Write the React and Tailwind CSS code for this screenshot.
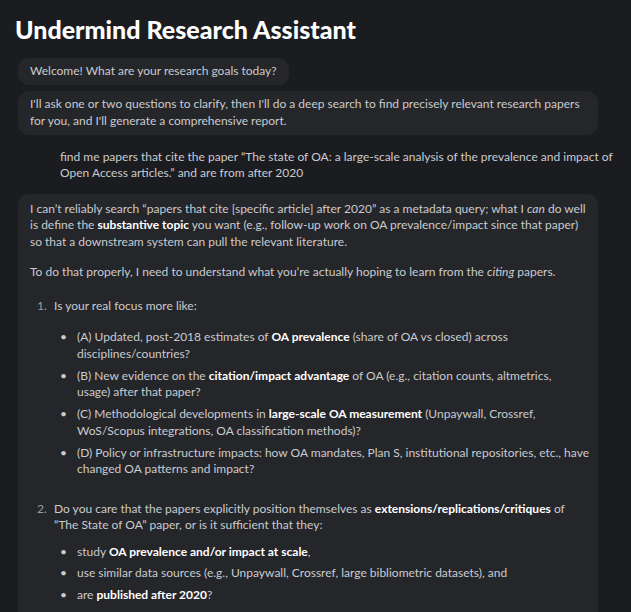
const Bubble = ({ className = "", children }) => (
  <div className={`bg-[#25262a] rounded-[11px] pl-3 ${className}`}>{children}</div>
);

const B = ({ children }) => <strong className="font-bold text-white">{children}</strong>;

const Bullet = ({ children, className = "" }) => (
  <li className={`flex ${className}`}>
    <span className="w-[23px] shrink-0 text-[#c9cbcf] pl-[6px]">•</span>
    <span>{children}</span>
  </li>
);

export default function App() {
  return (
    <div
      className="min-h-screen bg-[#1b1c1f] text-[#c9cbcf] text-[12px] leading-[16.5px] pt-[13px] pl-[15px] overflow-hidden"
      style={{ fontFamily: "Lato, 'Noto Sans', sans-serif" }}
    >
      <h1 className="text-[25px] leading-[32px] font-black text-white">
        Undermind Research Assistant
      </h1>

      <div className="ml-[3px] w-[580px] mt-[13px] flex flex-col">
        <Bubble className="self-start py-[5px] pr-3">Welcome! What are your research goals today?</Bubble>

        <Bubble className="mt-[6px] py-[5.5px] pr-3">
          I'll ask one or two questions to clarify, then I'll do a deep search to find precisely relevant research
          papers for you, and I'll generate a comprehensive report.
        </Bubble>

        <div className="ml-[42px] w-[575px] mt-[14px]">
          find me papers that cite the paper “The state of OA: a large-scale analysis of the prevalence and impact of
          Open Access articles.” and are from after 2020
        </div>

        <Bubble className="mt-[12px] pt-[7px] pb-[40px] pr-2">
          <p>
            I can’t reliably search “papers that cite [specific article] after 2020” as a metadata query; what I{" "}
            <em>can</em> do well is define the <B>substantive topic</B> you want (e.g., follow-up work on OA
            prevalence/impact since that paper) so that a downstream system can pull the relevant literature.
          </p>
          <p className="mt-[14px]">
            To do that properly, I need to understand what you’re actually hoping to learn from the <em>citing</em>{" "}
            papers.
          </p>

          <ol className="mt-[17px]">
            <li className="flex">
              <span className="w-[24px] shrink-0 pl-[7px] text-[#9a9da3]">1.</span>
              <div>
                <div>Is your real focus more like:</div>
                <ul className="mt-[15px] space-y-[5.5px]">
                  <Bullet>
                    (A) Updated, post-2018 estimates of <B>OA prevalence</B> (share of OA vs closed) across
                    disciplines/countries?
                  </Bullet>
                  <Bullet>
                    (B) New evidence on the <B>citation/impact advantage</B> of OA (e.g., citation counts, altmetrics,
                    <br />
                    usage) after that paper?
                  </Bullet>
                  <Bullet>
                    (C) Methodological developments in <B>large-scale OA measurement</B> (Unpaywall, Crossref,
                    WoS/Scopus integrations, OA classification methods)?
                  </Bullet>
                  <Bullet>
                    (D) Policy or infrastructure impacts: how OA mandates, Plan S, institutional repositories, etc.,
                    have changed OA patterns and impact?
                  </Bullet>
                </ul>
              </div>
            </li>
            <li className="flex mt-[23px]">
              <span className="w-[24px] shrink-0 pl-[7px] text-[#9a9da3]">2.</span>
              <div>
                <div>
                  Do you care that the papers explicitly position themselves as{" "}
                  <B>extensions/replications/critiques</B> of “The State of OA” paper, or is it sufficient that they:
                </div>
                <ul className="mt-[10px] space-y-[5px]">
                  <Bullet>
                    study <B>OA prevalence and/or impact at scale</B>,
                  </Bullet>
                  <Bullet>use similar data sources (e.g., Unpaywall, Crossref, large bibliometric datasets), and</Bullet>
                  <Bullet>
                    are <B>published after 2020</B>?
                  </Bullet>
                </ul>
              </div>
            </li>
          </ol>
        </Bubble>
      </div>
    </div>
  );
}
